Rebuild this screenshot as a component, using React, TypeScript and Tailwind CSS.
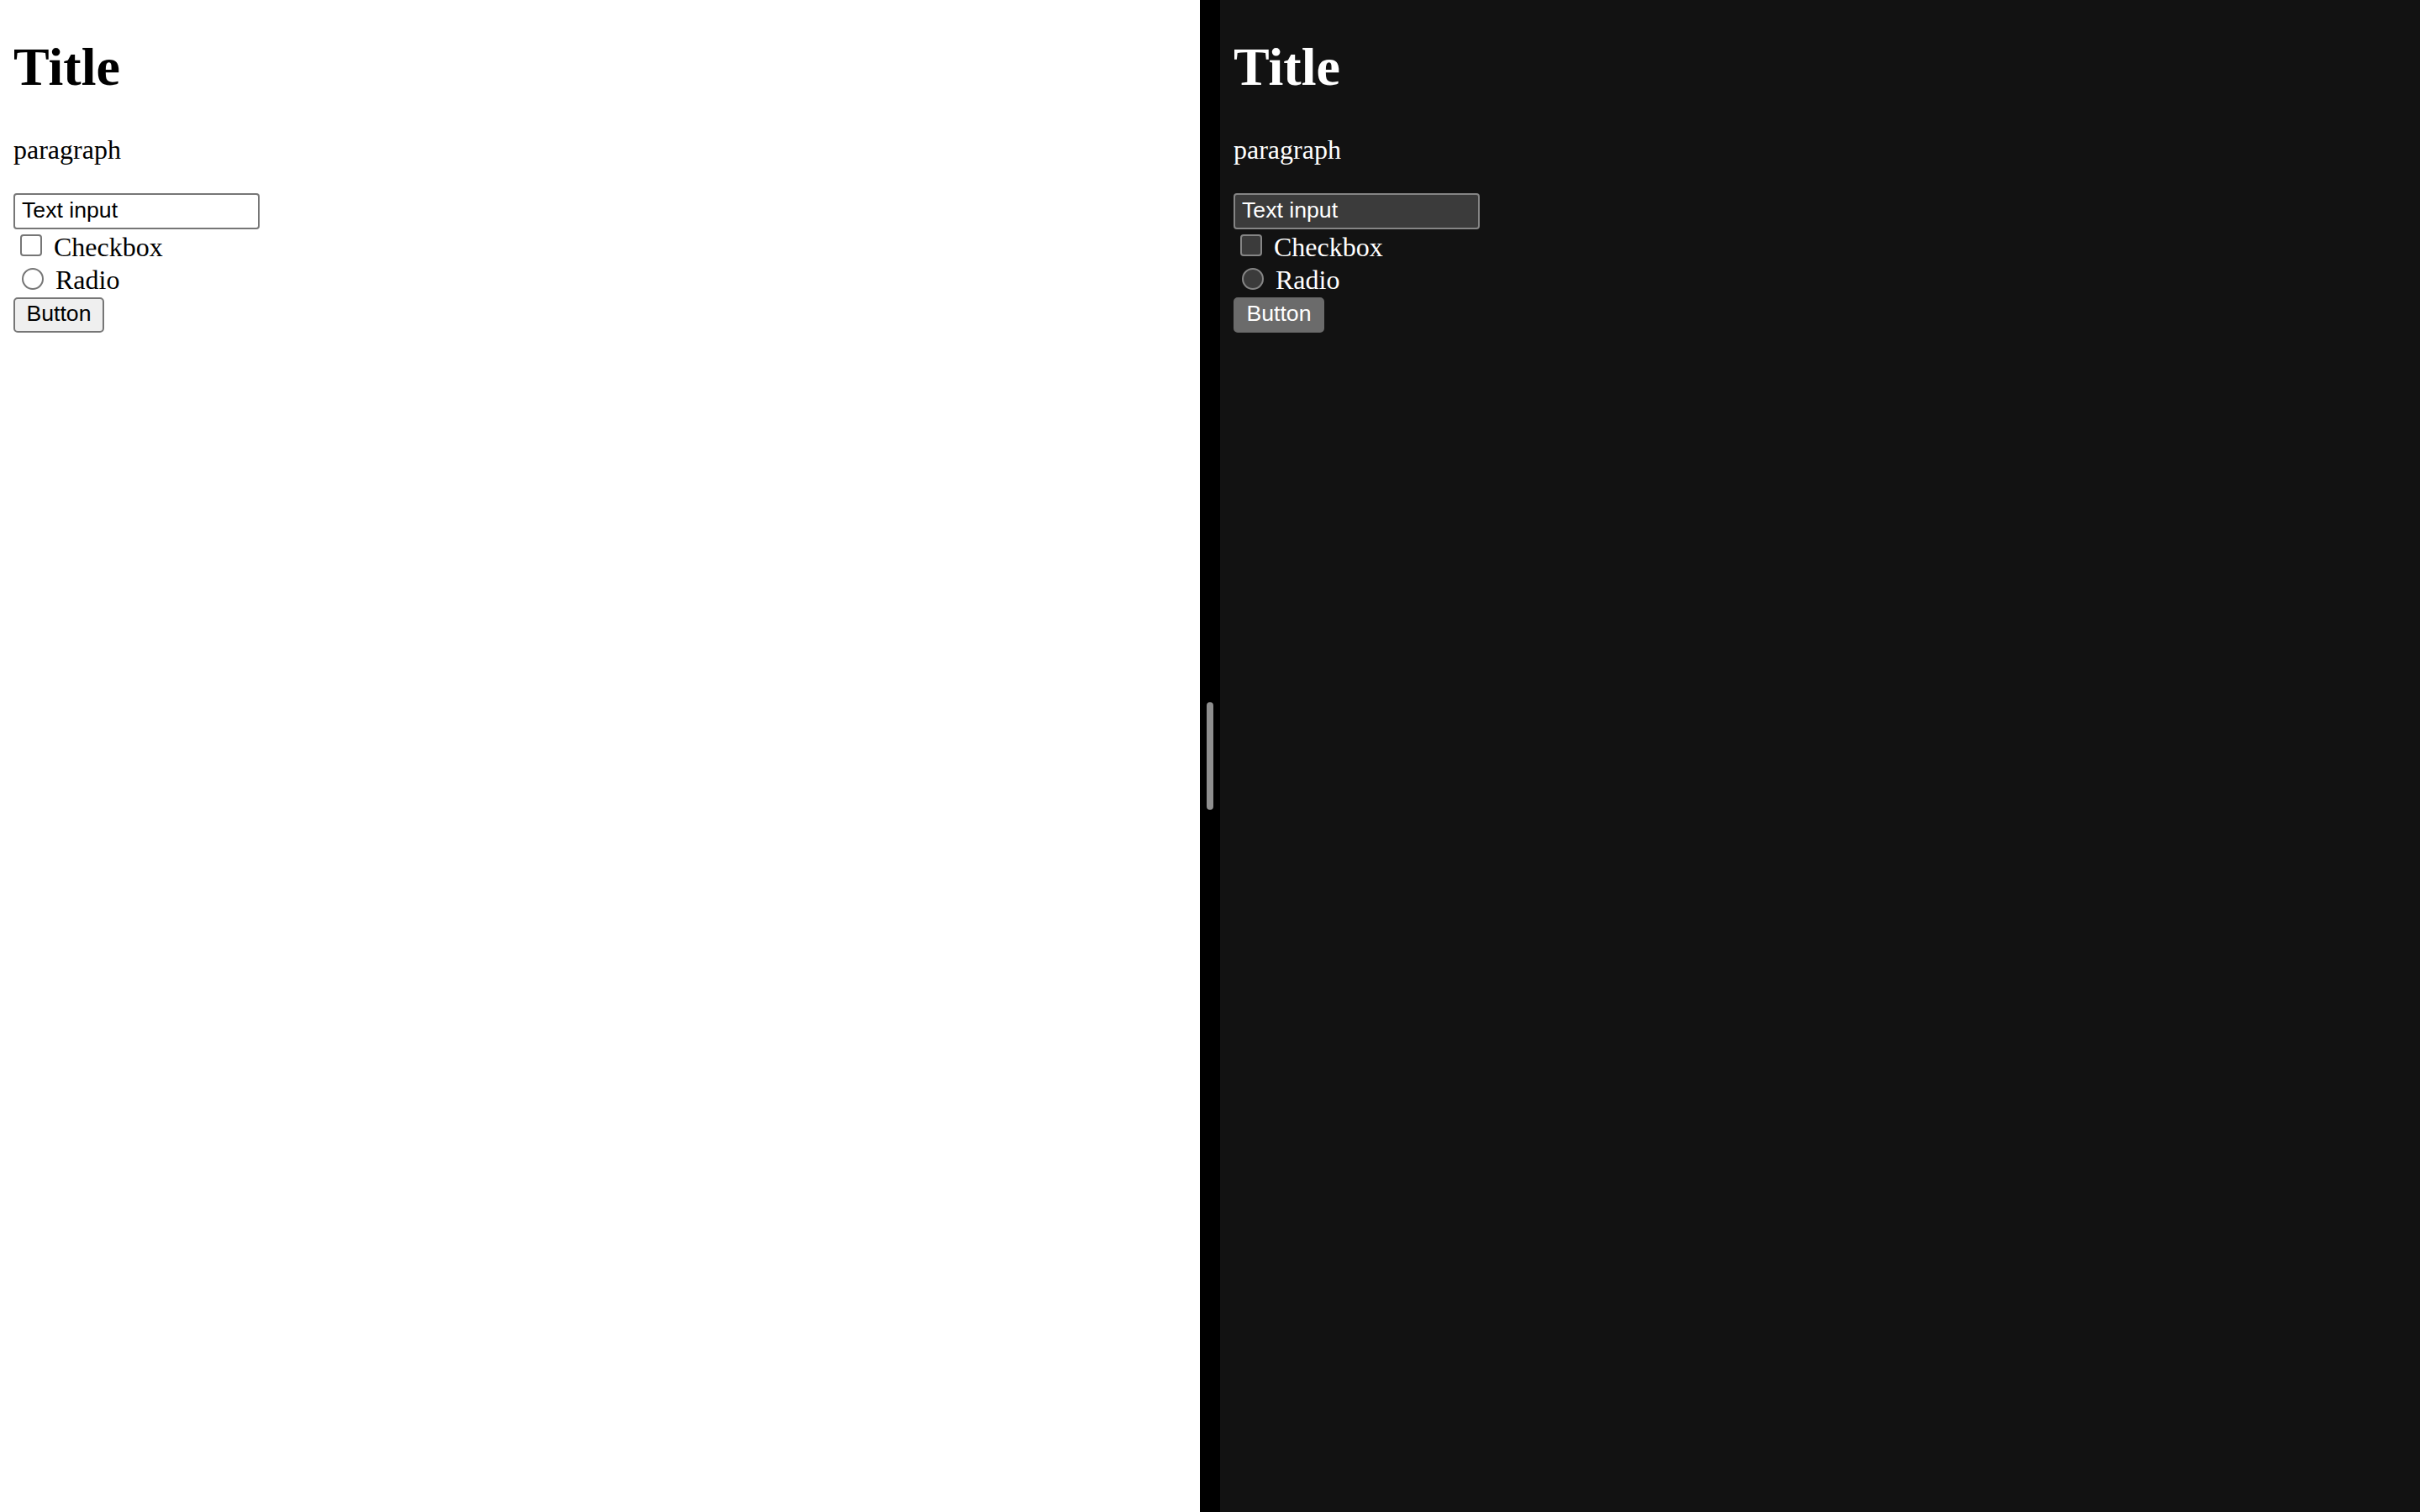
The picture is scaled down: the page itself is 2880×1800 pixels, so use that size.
import React from "react";

function Pane({ dark }: { dark: boolean }) {
  const text = dark ? "text-white" : "text-black";
  const inputCls = dark
    ? "bg-[#3b3b3b] border-[#858585] text-white"
    : "bg-white border-[#767676] text-black";
  const boxCls = dark
    ? "bg-[#3b3b3b] border-[#858585]"
    : "bg-white border-[#767676]";
  const btnCls = dark
    ? "bg-[#6b6b6b] border-[#6b6b6b] text-white"
    : "bg-[#efefef] border-[#767676] text-black";
  return (
    <div
      className={`h-full px-[16px] ${text} leading-[normal]`}
      style={{ fontFamily: '"Liberation Serif", "Times New Roman", serif' }}
    >
      <h1 className="mt-[43px] mb-[43px] text-[64px] font-bold leading-[normal]">Title</h1>
      <p className="mb-[33px] text-[32px] leading-[normal]">paragraph</p>
      <div className="flex flex-col items-start">
        <div
          className={`flex h-[43px] w-[293px] items-center rounded-[4px] border-2 pl-[8px] pb-[3px] text-[26.67px] leading-[normal] ${inputCls}`}
          style={{ fontFamily: '"Liberation Sans", Arial, sans-serif' }}
        >
          Text input
        </div>
        <div className="flex h-[40px] items-start">
          <span className={`ml-[8px] mt-[6px] block h-[26px] w-[26px] rounded-[4px] border-2 ${boxCls}`} />
          <span className="ml-[14px] mt-[3px] text-[32px] leading-[normal]">Checkbox</span>
        </div>
        <div className="flex h-[41px] items-start">
          <span className={`ml-[10px] mt-[6px] block h-[26px] w-[26px] rounded-full border-2 ${boxCls}`} />
          <span className="ml-[14px] mt-[2px] text-[32px] leading-[normal]">Radio</span>
        </div>
        <div
          className={`flex h-[42px] w-[108px] items-center justify-center rounded-[5px] border-2 pb-[3px] text-[26.67px] leading-[normal] ${btnCls}`}
          style={{ fontFamily: '"Liberation Sans", Arial, sans-serif' }}
        >
          Button
        </div>
      </div>
    </div>
  );
}

export default function App() {
  return (
    <div className="flex h-[1800px] w-[2880px] overflow-hidden">
      <div className="h-full w-[1428px] shrink-0 bg-white">
        <Pane dark={false} />
      </div>
      <div className="flex h-full w-[24px] shrink-0 items-center justify-center bg-black">
        <div className="h-[128px] w-[8px] rounded-full bg-[#8e8e8e]" />
      </div>
      <div className="h-full flex-1 bg-[#121212]">
        <Pane dark={true} />
      </div>
    </div>
  );
}
